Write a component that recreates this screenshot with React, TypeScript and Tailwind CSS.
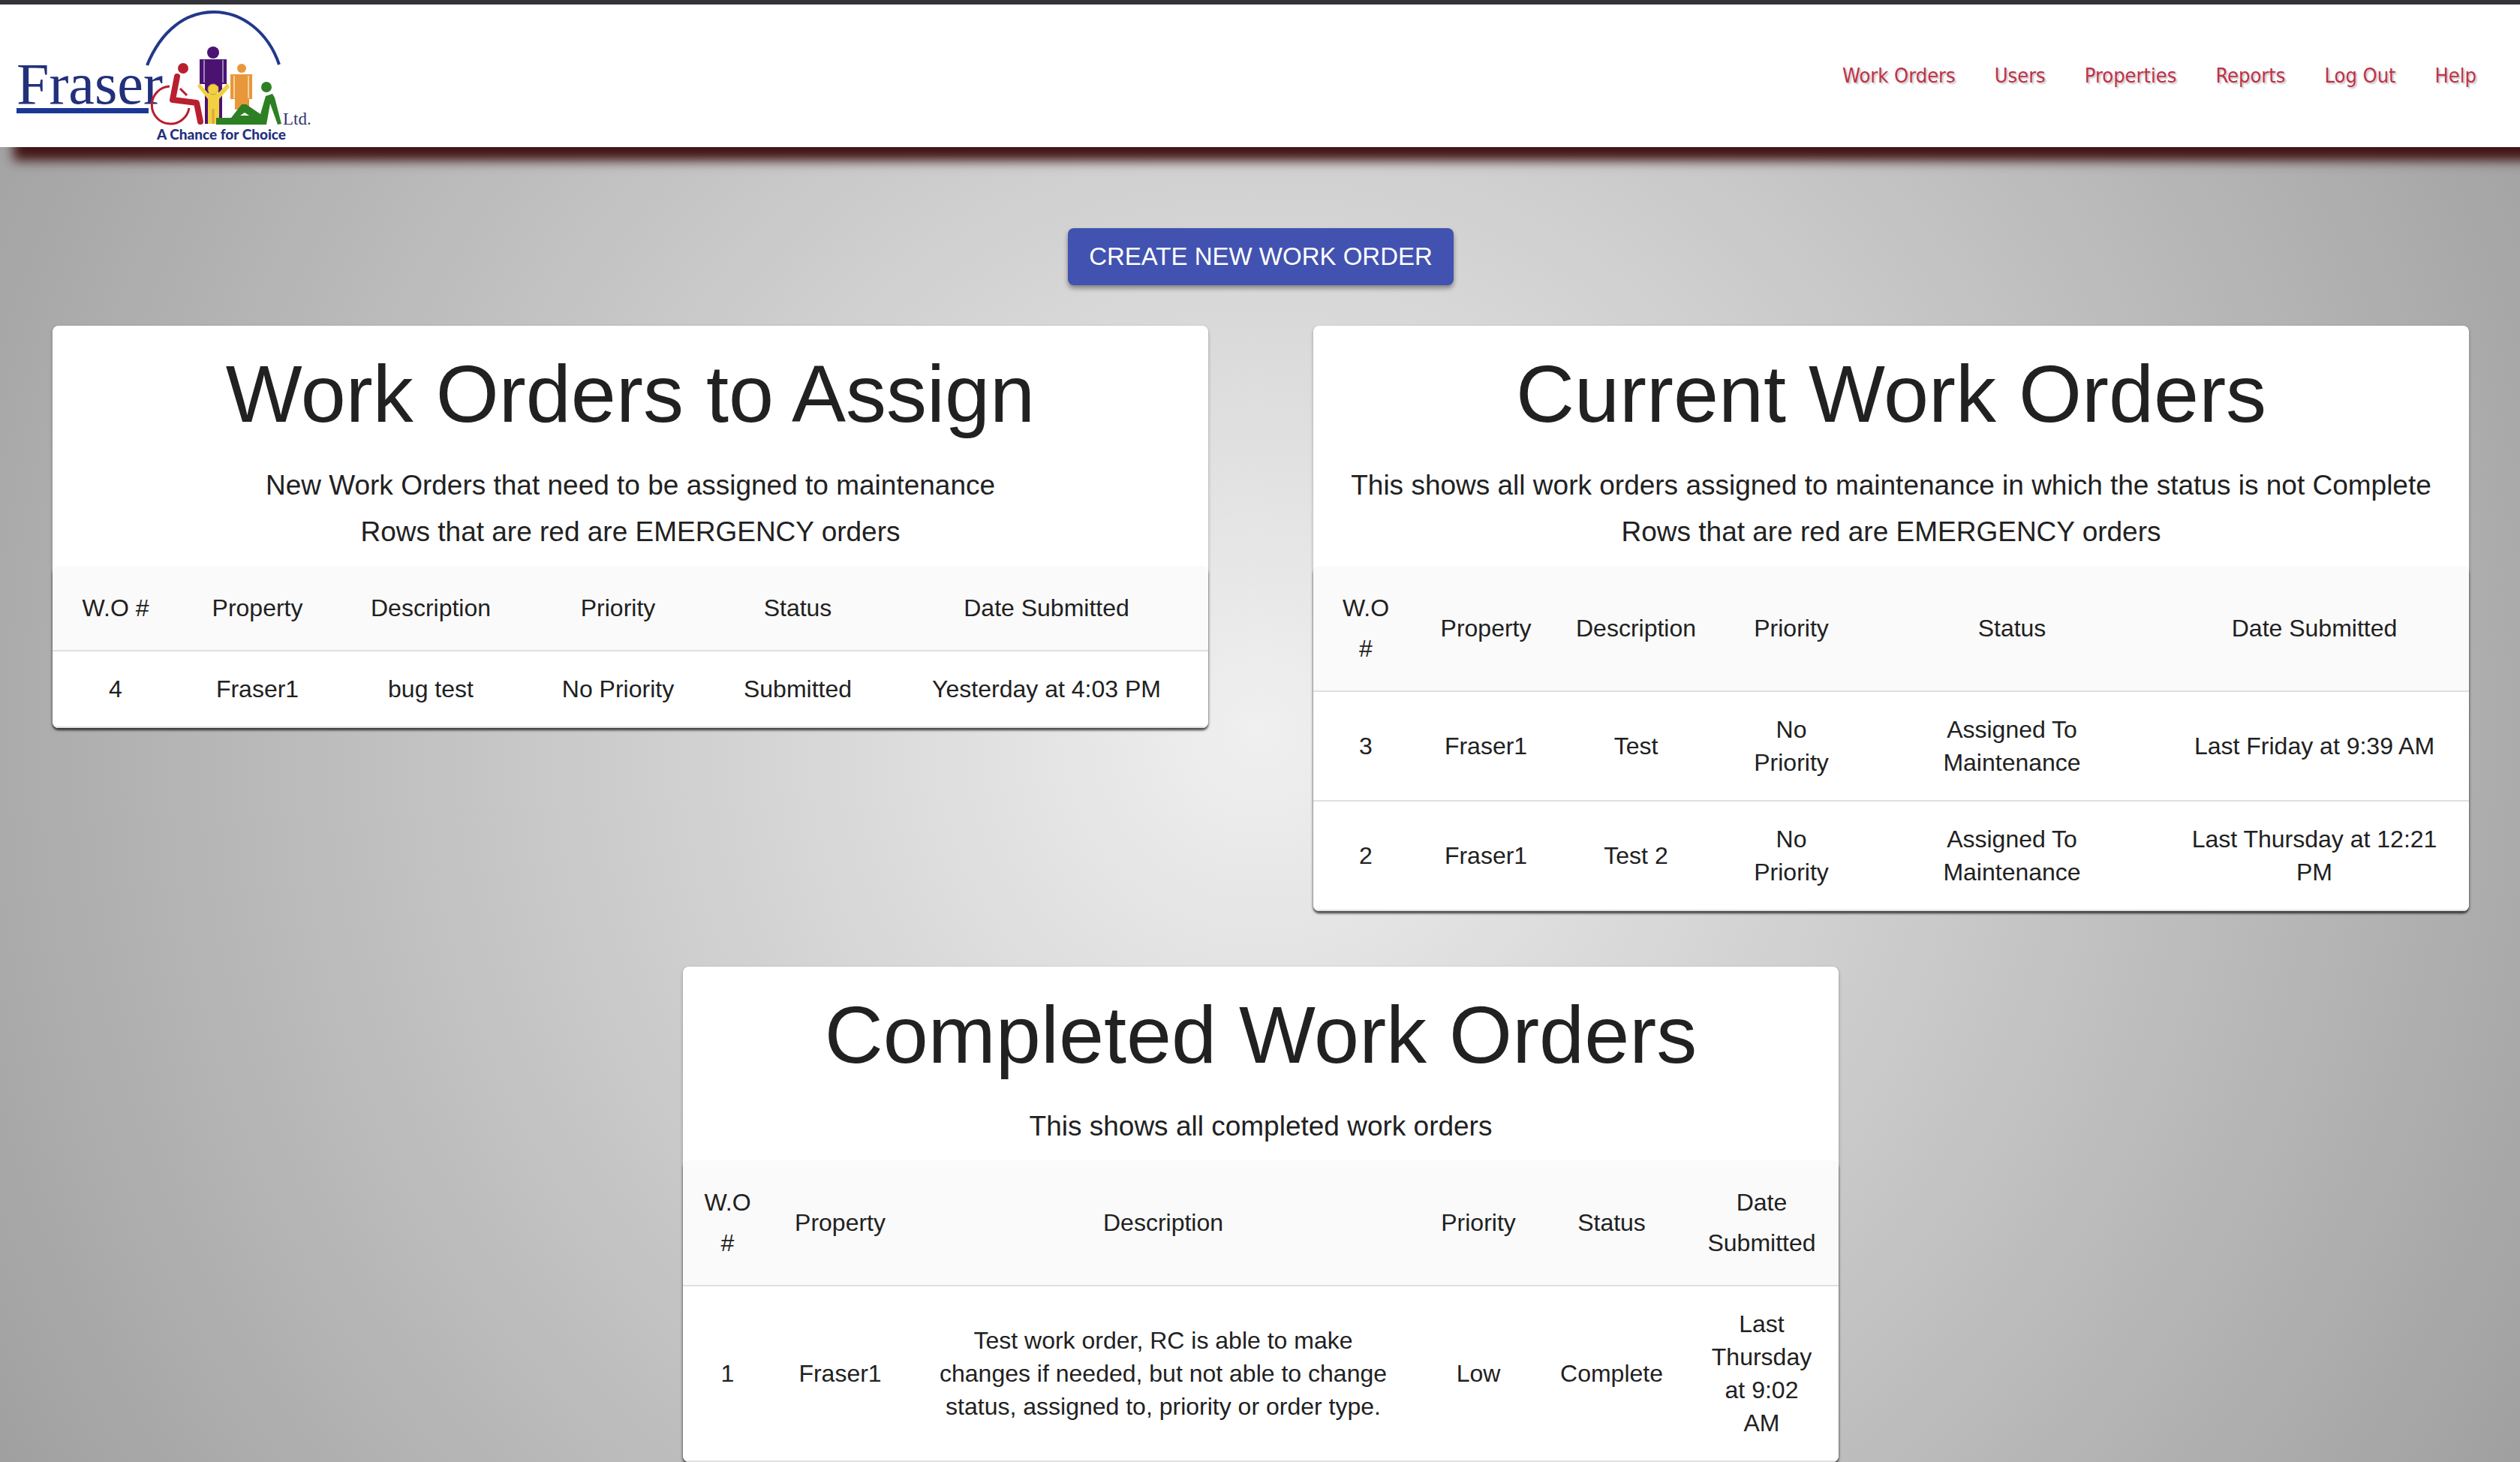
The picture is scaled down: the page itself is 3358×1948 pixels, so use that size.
import React from "react";

type Row = string[];

interface OrderCardProps {
  title: string;
  notes: string[];
  columnWidths: string[];
  rows: Row[];
}

const HEADERS = ["W.O #", "Property", "Description", "Priority", "Status", "Date Submitted"];

const NAV = ["Work Orders", "Users", "Properties", "Reports", "Log Out", "Help"];

function Logo() {
  return (
    <svg
      viewBox="22 14 392 174"
      className="h-[174px] w-[392px] shrink-0 overflow-visible"
      role="img"
      aria-label="Fraser Ltd."
    >
      <path d="M196 87 C215 40 248 16 285 16 C322 16 357 42 372 86" fill="none" stroke="#22388a" strokeWidth="4" />
      <text x="22" y="138" fontSize="78" fill="#22307c" style={{ fontFamily: "'Liberation Serif', serif" }}>
        Fraser
      </text>
      <rect x="22" y="144" width="176" height="7" fill="#1b3796" />
      <g fill="#4b1272">
        <circle cx="284" cy="70" r="8" />
        <path d="M266 79h36v33h-6v53h-5v-50h-13v50h-5v-53h-7z" />
      </g>
      <path d="M272 80v30M297 80v30" stroke="#9a86b4" strokeWidth="2" />
      <g fill="#e8973a">
        <circle cx="322" cy="91" r="6" />
        <path d="M307 99h29v33h-4v14h-19v-14h-6z" />
      </g>
      <path d="M312 101v30M331 101v30" stroke="#f3d3a2" strokeWidth="2" />
      <g fill="#f0d140">
        <path d="M266 111l12 14h12l13-14 3 5-14 16v33h-15v-33l-14-17z" />
        <circle cx="284" cy="119" r="7" stroke="#c99a3c" strokeWidth="1" />
      </g>
      <path d="M284 145v20" stroke="#e0a43a" strokeWidth="3" />
      <g fill="none" stroke="#b91f2e">
        <path d="M226 115a25 25 0 1 0 26 29" strokeWidth="3" />
        <path d="M236 102l-6 31 32 4 5 25" strokeWidth="8" strokeLinejoin="round" strokeLinecap="round" />
        <path d="M240 118l9 9" strokeWidth="3" />
      </g>
      <circle cx="244" cy="91" r="7" fill="#b91f2e" />
      <g fill="#2c8023">
        <circle cx="355" cy="116" r="7" />
        <path d="M288 157h20l14-18 6 0 19 13 7-24 9-3 3 5 9 35-5 1-10-28-5 28h-67z" />
        <path d="M320 154l6-4 6 4z" fill="#fff" />
      </g>
      <text x="377" y="166" fontSize="23" fill="#35356f" style={{ fontFamily: "'Liberation Serif', serif" }}>
        Ltd.
      </text>
      <text x="209" y="186" fontSize="19" fontWeight="900" fill="#22307c" style={{ fontFamily: "Lato, sans-serif" }}>
        A Chance for Choice
      </text>
    </svg>
  );
}

function OrderCard({ title, notes, columnWidths, rows }: OrderCardProps) {
  return (
    <section className="rounded-lg bg-white shadow-[0_2px_4px_rgba(0,0,0,0.3)]">
      <div className="px-7 pt-7 pb-[14px] text-center">
        <h2 className="mb-7 text-[108px] leading-[126px]">{title}</h2>
        {notes.map((note) => (
          <p key={note} className="text-[37px] leading-[62px]">
            {note}
          </p>
        ))}
      </div>
      <div className="overflow-hidden rounded-lg shadow-[0_3px_3px_rgba(0,0,0,0.6)]">
        <table className="w-full table-fixed border-separate border-spacing-0 text-center text-[32px]">
          <colgroup>
            {columnWidths.map((width, i) => (
              <col key={i} className={width} />
            ))}
          </colgroup>
          <thead>
            <tr className="bg-[#fafafa]">
              {HEADERS.map((header) => (
                <th
                  key={header}
                  scope="col"
                  className="border-b-2 border-[#e0e0e0] px-7 py-[29px] leading-[54px] font-normal"
                >
                  {header}
                </th>
              ))}
            </tr>
          </thead>
          <tbody>
            {rows.map((row) => (
              <tr key={row[0]} className="bg-white">
                {row.map((cell, i) => (
                  <td key={i} className="border-b-2 border-[#e0e0e0] px-7 py-7 leading-[44px]">
                    {cell}
                  </td>
                ))}
              </tr>
            ))}
          </tbody>
        </table>
      </div>
    </section>
  );
}

export default function App() {
  return (
    <div className="flex min-h-screen flex-col bg-[radial-gradient(circle_at_center,#f0f0f0,#a0a0a0)] font-['Helvetica','Liberation_Sans',sans-serif] text-[#212121]">
      <header className="relative flex items-center justify-between border-t-[6px] border-[#333437] bg-white py-2 pr-[58px] pl-[22px] shadow-[18px_18px_14px_#431616]">
        <Logo />
        <nav className="flex gap-[52px] font-['DejaVu_Sans_Condensed','Open_Sans',sans-serif] text-[27px] text-[#bf3048] [text-shadow:2px_2px_2px_#c4c4c4]">
          {NAV.map((item) => (
            <a key={item} href="#">
              {item}
            </a>
          ))}
        </nav>
      </header>

      <main className="pt-[108px] pr-[68px] pl-[70px]">
        <div className="flex justify-center">
          <button
            type="button"
            className="rounded-lg bg-[#4252b0] px-7 py-2 text-[33px] leading-[60px] text-white uppercase shadow-[0_4px_6px_rgba(0,0,0,0.4)]"
          >
            Create New Work Order
          </button>
        </div>

        <div className="mt-[54px] grid grid-cols-2 items-start gap-x-[140px]">
          <OrderCard
            title="Work Orders to Assign"
            notes={[
              "New Work Orders that need to be assigned to maintenance",
              "Rows that are red are EMERGENCY orders",
            ]}
            columnWidths={["w-[168px]", "w-[210px]", "w-[252px]", "w-[247px]", "w-[232px]", "w-[431px]"]}
            rows={[["4", "Fraser1", "bug test", "No Priority", "Submitted", "Yesterday at 4:03 PM"]]}
          />
          <OrderCard
            title="Current Work Orders"
            notes={[
              "This shows all work orders assigned to maintenance in which the status is not Complete",
              "Rows that are red are EMERGENCY orders",
            ]}
            columnWidths={["w-[140px]", "w-[180px]", "w-[220px]", "w-[194px]", "w-[394px]", "w-[412px]"]}
            rows={[
              ["3", "Fraser1", "Test", "No Priority", "Assigned To Maintenance", "Last Friday at 9:39 AM"],
              ["2", "Fraser1", "Test 2", "No Priority", "Assigned To Maintenance", "Last Thursday at 12:21 PM"],
            ]}
          />
        </div>

        <div className="mx-auto mt-[74px] w-[calc(50%-70px)]">
          <OrderCard
            title="Completed Work Orders"
            notes={["This shows all completed work orders"]}
            columnWidths={["w-[119px]", "w-[181px]", "w-[680px]", "w-[160px]", "w-[195px]", "w-[205px]"]}
            rows={[
              [
                "1",
                "Fraser1",
                "Test work order, RC is able to make changes if needed, but not able to change status, assigned to, priority or order type.",
                "Low",
                "Complete",
                "Last Thursday at 9:02 AM",
              ],
            ]}
          />
        </div>
      </main>
    </div>
  );
}
